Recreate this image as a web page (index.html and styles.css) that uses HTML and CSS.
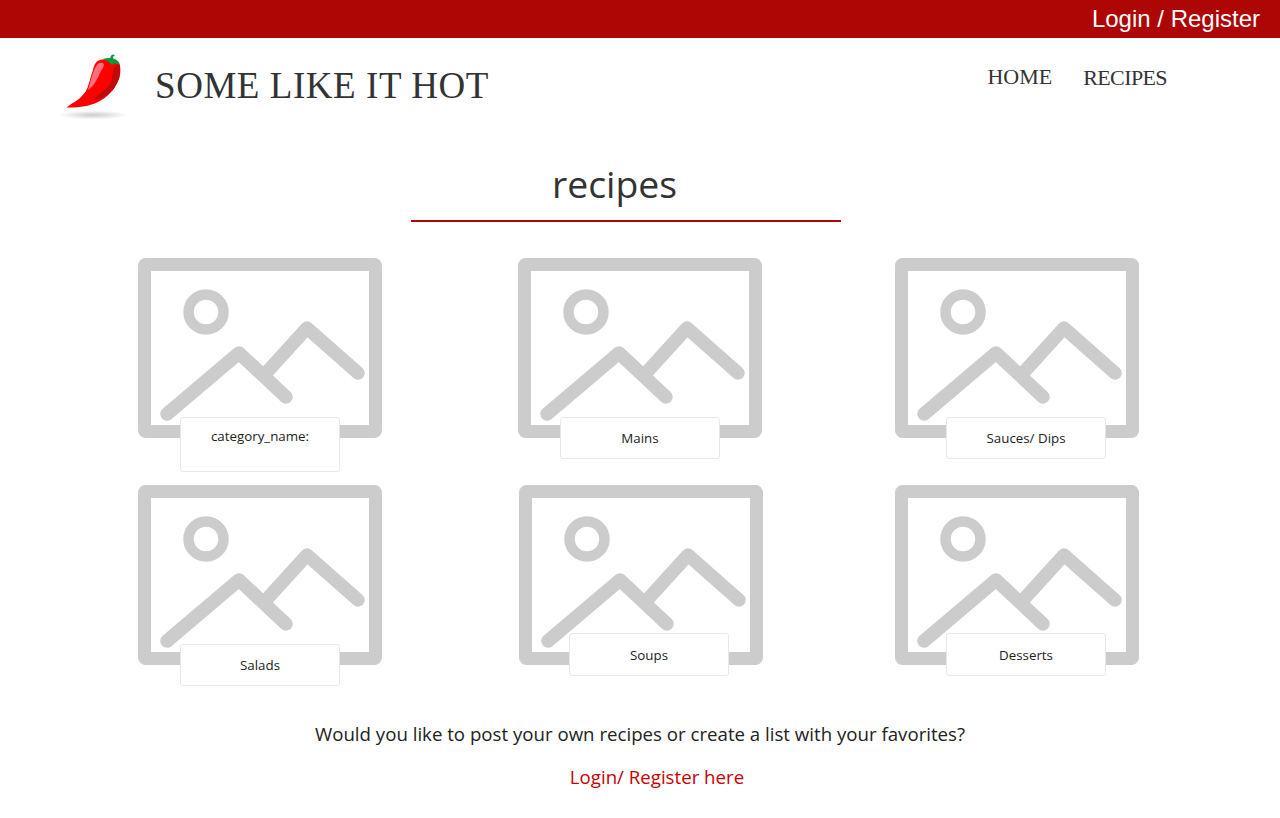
FILE: index.html
```html
<!DOCTYPE html>
<html lang="en">
<head>
    <meta charset="UTF-8">
    <meta name="viewport" content="width=device-width, initial-scale=1.0">
    <title>Some Like It Hot</title>
    <link rel="stylesheet" href="styles.css">
</head>
<body>

<svg class="defs" width="0" height="0">
    <symbol id="placeholder" viewBox="0 0 244 180">
        <rect x="6.500" y="6.500" width="231" height="167" rx="1" fill="none" stroke="#ccc" stroke-width="13" stroke-linejoin="round"/>
        <circle cx="68" cy="54" r="17.500" fill="none" stroke="#ccc" stroke-width="10.500"/>
        <path d="M29 156 L101 95 L148 139 M129 114 L169 70 L220 115" fill="none" stroke="#ccc" stroke-width="13.500" stroke-linecap="round" stroke-linejoin="round"/>
    </symbol>
</svg>

<div class="top-bar">
    <a class="top-login" href="#">Login / Register</a>
</div>

<header class="site-header">
    <a class="brand" href="#">
        <svg class="logo" viewBox="50 50 90 70" width="90" height="70">
            <defs>
                <radialGradient id="shadow">
                    <stop offset="0" stop-color="#ccc"/>
                    <stop offset="1" stop-color="#fff"/>
                </radialGradient>
            </defs>
            <ellipse cx="93" cy="115" rx="35" ry="4.500" fill="url(#shadow)"/>
            <!-- body -->
            <path d="M66.500 107.500 C72 103 77 101 80 98 C85 93 87 90 88 86 C90 80 91 75 93 70 C94 65 96 61 100 60 C103 58.500 108 59 112 61 C115 60 118 61 120 65 C121 71 120 77 118 81 C115 88 112 91 108 95 C104 99 100 101 96 103 C89 106 78 108 66.500 107.500 Z" fill="#f00"/>
            <!-- shaded side -->
            <path d="M93 100 C97 96 100 94 103 91 C108 87 112 83 112 78 C112 74 113 71 114 67 L119 64 C121 71 120 77 118 81 C115 88 112 91 108 95 C104 98 98 100 93 100 Z" fill="#c00a0a"/>
            <!-- highlight -->
            <path d="M88 90 C90 83 92 74 95 68 C97 63 100 62 103 63 C105 65 103 68 101 71 C99 75 98 78 96 81 C94 85 91 88 88 90 Z" fill="#ff6f78"/>
            <!-- stem -->
            <path d="M103 59 C105 58 108 58 110 58 C111 56 111 55 113 54.500 L115 55.500 C113 56 113 57 113 58.500 C116 59 119 61 120 65 C117 63 114 63 112 65 C109 62 106 60 103 59 Z" fill="#0a9a3c"/>
        </svg>
        <span class="brand-name">SOME LIKE IT HOT</span>
    </a>
    <nav class="main-nav">
        <a href="#">HOME</a>
        <a class="nav-recipes" href="#">RECIPES</a>
    </nav>
</header>

<main>
    <h1 class="page-title">recipes</h1>

    <div class="categories">
        <div class="category">
            <svg class="thumb"><use href="#placeholder"/></svg>
            <div class="label label-tall">category_name:</div>
        </div>
        <div class="category">
            <svg class="thumb"><use href="#placeholder"/></svg>
            <div class="label">Mains</div>
        </div>
        <div class="category">
            <svg class="thumb"><use href="#placeholder"/></svg>
            <div class="label label-right">Sauces/ Dips</div>
        </div>
        <div class="category">
            <svg class="thumb"><use href="#placeholder"/></svg>
            <div class="label">Salads</div>
        </div>
        <div class="category category-nudge">
            <svg class="thumb"><use href="#placeholder"/></svg>
            <div class="label label-right label-high">Soups</div>
        </div>
        <div class="category">
            <svg class="thumb"><use href="#placeholder"/></svg>
            <div class="label label-right label-high">Desserts</div>
        </div>
    </div>

    <div class="cta">
        <p class="cta-text">Would you like to post your own recipes or create a list with your favorites?</p>
        <a class="cta-link" href="#">Login/ Register here</a>
    </div>
</main>

</body>
</html>
```

FILE: styles.css
```css
body {
    margin: 0;
    background: #fff;
    color: #333;
    font-family: "Open Sans", "Liberation Sans", sans-serif;
}
a {
    text-decoration: none;
}
.defs {
    position: absolute;
}

/* top bar */
.top-bar {
    height: 38px;
    background: #ae0505;
    display: flex;
    justify-content: flex-end;
    align-items: center;
    padding-right: 20px;
}
.top-login {
    color: #fff;
    font-family: "Liberation Sans", Arial, sans-serif;
    font-size: 24px;
}

/* header */
.site-header {
    display: flex;
    justify-content: space-between;
    height: 80px;
    padding: 12px 113px 0 50px;
}
.brand {
    display: flex;
    align-items: flex-start;
    color: #333;
}
.logo {
    flex: none;
}
.brand-name {
    margin: 13px 0 0 15px;
    font-family: "Liberation Serif", "Times New Roman", serif;
    font-size: 37px;
    letter-spacing: 0.55px;
    line-height: 46px;
    white-space: nowrap;
}
.main-nav {
    display: flex;
    gap: 31px;
    padding-top: 14px;
}
.main-nav a {
    color: #333;
    font-family: "Liberation Serif", "Times New Roman", serif;
    font-size: 22px;
    line-height: 26px;
}
.main-nav .nav-recipes {
    margin-top: 1px;
    letter-spacing: -0.6px;
}

/* title */
.page-title {
    width: 430px;
    margin: 30px 0 0 411px;
    padding: 0 23px 12px 0;
    box-sizing: border-box;
    border-bottom: 2px solid #ae0505;
    text-align: center;
    font-size: 37.33px;
    font-weight: 400;
    line-height: 48px;
}

/* categories */
.categories {
    display: grid;
    grid-template-columns: 380px 377px 244px;
    grid-auto-rows: 227px;
    margin: 36px 0 0 138px;
}
.category {
    position: relative;
    width: 244px;
    height: 180px;
}
.category-nudge {
    margin-left: 1px;
}
.thumb {
    display: block;
    width: 244px;
    height: 180px;
}
.label {
    position: absolute;
    top: 159px;
    left: 42px;
    width: 160px;
    height: 42px;
    box-sizing: border-box;
    background: #fff;
    border: 1px solid #e8e8e8;
    border-radius: 3px;
    color: #222;
    font-size: 13.33px;
    line-height: 41px;
    text-align: center;
}
.label-tall {
    height: 55px;
    line-height: 37px;
}
.label-right {
    left: 51px;
}
.category-nudge .label-right {
    left: 50px;
}
.label-high {
    top: 148px;
    height: 43px;
    line-height: 42px;
}

/* call to action */
.cta {
    padding-top: 8px;
    text-align: center;
}
.cta-text {
    margin: 0;
    color: #222;
    font-size: 18.67px;
    line-height: 28px;
}
.cta-link {
    display: block;
    margin: 15px 0 0 34px;
    color: #c80000;
    font-size: 18.67px;
    line-height: 28px;
}
```
